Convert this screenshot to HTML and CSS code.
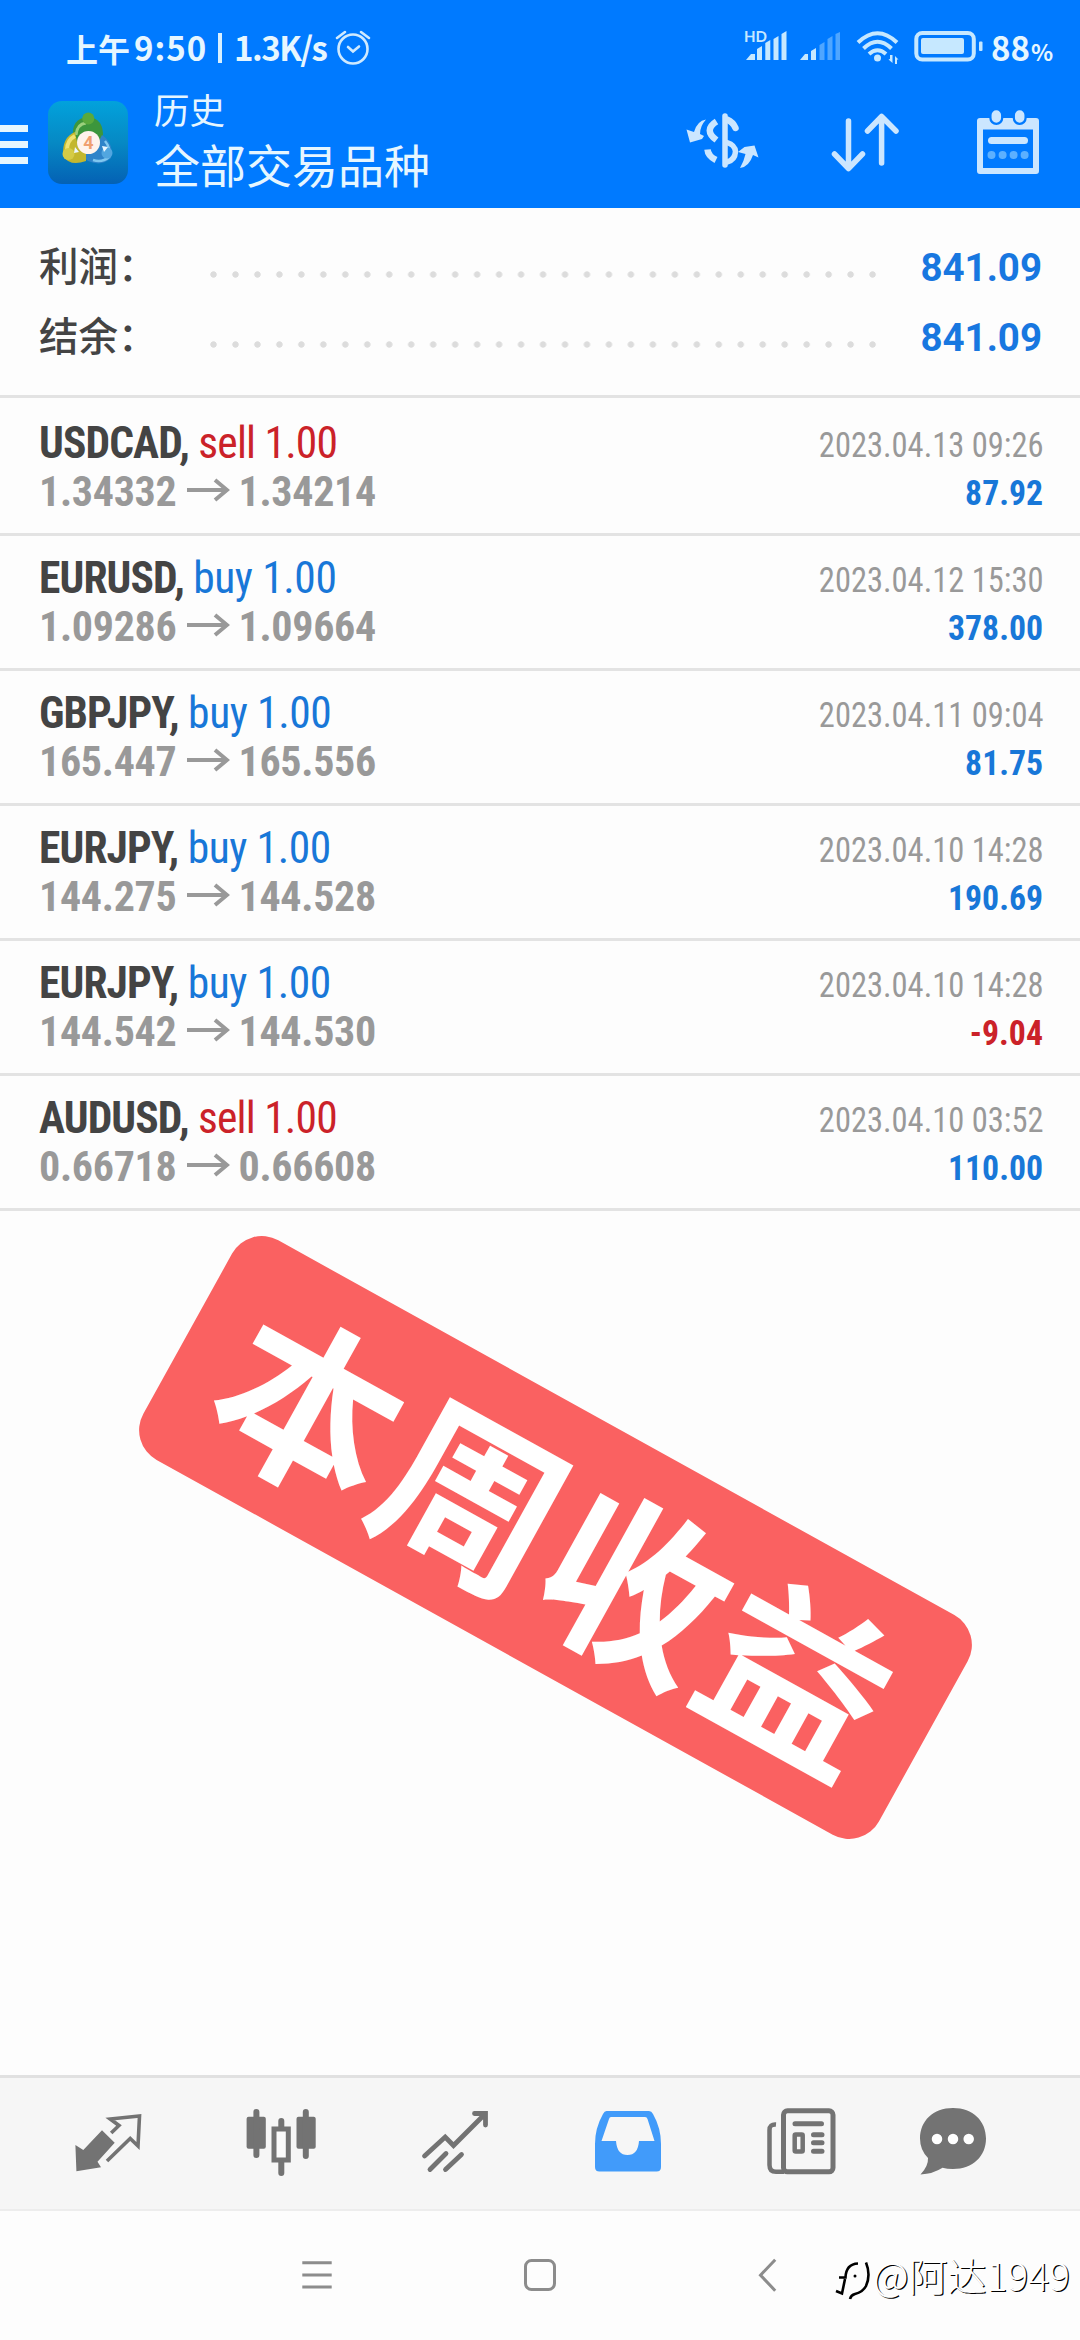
FILE: index.html
```html
<!DOCTYPE html>
<html lang="zh-CN">
<head>
    <meta charset="UTF-8">
    <meta name="viewport" content="width=device-width, initial-scale=1.0">
    <title>历史</title>
    <link rel="stylesheet" href="styles.css">
</head>
<body>
    <header class="header">
        <!-- 状态栏 -->
        <div class="status-bar">
            <span class="status-time">上午</span>
            <span class="status-clock">9:50</span>
            <span class="status-sep"></span>
            <span class="status-speed">1.3K/s</span>
            <svg class="alarm" width="36" height="36" viewBox="335 31 36 36" fill="none" stroke="#cfeaff" stroke-width="2.6" stroke-linecap="round">
                <circle cx="353" cy="50" r="14.5"/>
                <path d="M337 39l8-6M361 33l8 6M348 48l5 4.500 6-5"/>
            </svg>
            <svg class="status-icons" width="240" height="40" viewBox="743 30 240 40" fill="#c6e8ff">
                <text class="hd" x="744" y="43.500">HD</text>
                <path d="M746 62l5-6h4v6zM757 51l5-3v14h-5zM765.300 45l5-3v20h-5zM773.500 41l5-3v24h-5zM781.500 36l5-3v29h-5z"/>
                <path d="M800 62l5-6h3v6zM811 53l5-3v12h-5z"/>
                <path fill="#4fa6ff" d="M819.500 47l5-3v18h-5zM827.500 41l5-3v24h-5zM835.500 36l4.500-2v28h-4.500z"/>
                <g fill="none" stroke="#c6e8ff" stroke-width="4">
                    <path d="M858 44.500Q877.500 26 897 44.500M863.500 50.500Q877.500 37 891.500 50.500M869 56Q877.500 48.500 886 56"/>
                    <rect x="916.300" y="35" width="57.500" height="26.500" rx="6"/>
                </g>
                <circle cx="877.500" cy="60" r="3.500"/>
                <path d="M890 57h2.500v8l-4-3.500 1.500-.5zM895 66v-8l3.500 3.500h-1.500v4.500z"/>
                <rect x="921" y="40" width="43" height="16" rx="2"/>
                <rect x="979" y="43.500" width="3.500" height="9.500" rx="1"/>
            </svg>
            <span class="battery-num">88</span><span class="battery-unit">%</span>
        </div>

        <!-- 标题栏 -->
        <div class="toolbar">
            <div class="menu"><i></i><i></i><i></i></div>
            <svg class="app-icon" width="80" height="84" viewBox="0 0 80 84">
                <defs>
                    <linearGradient id="iconBg" x1="0" y1="0" x2="0" y2="1">
                        <stop offset="0" stop-color="#02a2dc"/>
                        <stop offset=".5" stop-color="#0689c4"/>
                        <stop offset="1" stop-color="#0461b4"/>
                    </linearGradient>
                </defs>
                <rect x="0" y="0" width="80" height="83" rx="14" fill="url(#iconBg)"/>
                <path d="M25 37Q23 17 40 16Q56 17 55 37L50 44H30Z" fill="#3c963c"/>
                <path d="M28 34Q29 23 38 22" stroke="#9bd07c" stroke-width="3" fill="none"/>
                <path d="M54 34Q66 42 63 57Q54 66 40 60L33 54L50 42Z" fill="#2f83c9"/>
                <path d="M57 40Q63 47 61 56Q54 62 45 59" stroke="#80c7ef" stroke-width="2.500" fill="none"/>
                <path d="M27 31Q14 36 15 55Q22 66 38 60V52L30 46Z" fill="#c3b72e"/>
                <path d="M27 35Q19 39 19 49" stroke="#efe272" stroke-width="4" fill="none"/>
                <circle cx="40.300" cy="17.500" r="6" fill="#5aa93c"/>
                <circle cx="20.500" cy="53" r="6" fill="#d5cb45"/>
                <circle cx="59" cy="52" r="5.500" fill="#51a6e0"/>
                <path d="M54 45l6 1-4 5zM27 46l4 5-5 1z" fill="#e9f6ff"/>
                <circle cx="40.500" cy="41.500" r="11.500" fill="#fff3ec"/>
                <text class="icon-num" x="40.500" y="48">4</text>
            </svg>
            <div class="titles">
                <div class="title-small">历史</div>
                <div class="title-main">全部交易品种</div>
            </div>
            <svg class="tool-icons" width="360" height="70" viewBox="682 108 360 70" fill="none" stroke="#cbe6ff" stroke-width="5.500" stroke-linecap="round" stroke-linejoin="round">
                <!-- 货币 -->
                <path d="M725 116V165"/>
                <path d="M727 119.500Q733 122 735.500 128" stroke-width="6.500"/>
                <path d="M716.500 121.500Q703 130 716.500 140M707.500 149.500Q708 156 716 160" stroke-width="6.500" stroke-linecap="butt"/>
                <path d="M727 142.500Q735 145 735.500 151.500Q735 160 727 162" stroke-width="5.500"/>
                <g fill="#cbe6ff" stroke="none">
                    <path d="M706 119.500Q697 121 694 132L686.500 129.500L690 142.500L702 139L704 136L700 134Q700 126 706 119.500Z"/>
                    <path d="M740 168Q749 167 753 155L758.500 157.500L754.500 145.500L744.500 147L738 152L745.500 154Q744 161 740 168Z"/>
                </g>
                <!-- 排序 -->
                <path d="M848.500 121V168M834.500 154L848.500 168.500L862.500 154"/>
                <path d="M881.600 163V117M867.500 131L881.600 116.500L896 131"/>
                <!-- 日历 -->
                <path d="M980 121H1036V171H980Z" stroke-width="6"/>
                <path d="M980 125.500H1036" stroke-width="8" stroke-linecap="butt"/>
                <path d="M996.300 112V118M1019.700 112V118" stroke="#007aff" stroke-width="14"/>
                <path d="M996.300 115V118M1019.700 115V118" stroke-width="9.500"/>
                <path d="M991.500 140.500H1024.500" stroke-width="7"/>
                <path d="M991.500 155h.01M1002.600 155h.01M1013.600 155h.01M1024.600 155h.01" stroke="#5cb0ff" stroke-width="8"/>
            </svg>
        </div>
    </header>

    <main class="content">
        <section class="summary">
            <div class="summary-row">
                <span class="summary-label">利润：</span>
                <span class="dots"></span>
                <span class="summary-value">841.09</span>
            </div>
            <div class="summary-row">
                <span class="summary-label">结余：</span>
                <span class="dots"></span>
                <span class="summary-value">841.09</span>
            </div>
        </section>

        <ul class="deals">
            <li class="deal">
                <div class="line"><span class="symbol"><b>USDCAD,</b> <span class="sell">sell 1.00</span></span><span class="date">2023.04.13 09:26</span></div>
                <div class="line"><span class="prices"><span>1.34332</span><svg class="arrow" viewBox="0 0 44 24"><path d="M1 12H41M29 2L41 12L29 22"/></svg><span>1.34214</span></span><span class="profit">87.92</span></div>
            </li>
            <li class="deal">
                <div class="line"><span class="symbol"><b>EURUSD,</b> <span class="buy">buy 1.00</span></span><span class="date">2023.04.12 15:30</span></div>
                <div class="line"><span class="prices"><span>1.09286</span><svg class="arrow" viewBox="0 0 44 24"><path d="M1 12H41M29 2L41 12L29 22"/></svg><span>1.09664</span></span><span class="profit">378.00</span></div>
            </li>
            <li class="deal">
                <div class="line"><span class="symbol"><b>GBPJPY,</b> <span class="buy">buy 1.00</span></span><span class="date">2023.04.11 09:04</span></div>
                <div class="line"><span class="prices"><span>165.447</span><svg class="arrow" viewBox="0 0 44 24"><path d="M1 12H41M29 2L41 12L29 22"/></svg><span>165.556</span></span><span class="profit">81.75</span></div>
            </li>
            <li class="deal">
                <div class="line"><span class="symbol"><b>EURJPY,</b> <span class="buy">buy 1.00</span></span><span class="date">2023.04.10 14:28</span></div>
                <div class="line"><span class="prices"><span>144.275</span><svg class="arrow" viewBox="0 0 44 24"><path d="M1 12H41M29 2L41 12L29 22"/></svg><span>144.528</span></span><span class="profit">190.69</span></div>
            </li>
            <li class="deal">
                <div class="line"><span class="symbol"><b>EURJPY,</b> <span class="buy">buy 1.00</span></span><span class="date">2023.04.10 14:28</span></div>
                <div class="line"><span class="prices"><span>144.542</span><svg class="arrow" viewBox="0 0 44 24"><path d="M1 12H41M29 2L41 12L29 22"/></svg><span>144.530</span></span><span class="profit loss">-9.04</span></div>
            </li>
            <li class="deal">
                <div class="line"><span class="symbol"><b>AUDUSD,</b> <span class="sell">sell 1.00</span></span><span class="date">2023.04.10 03:52</span></div>
                <div class="line"><span class="prices"><span>0.66718</span><svg class="arrow" viewBox="0 0 44 24"><path d="M1 12H41M29 2L41 12L29 22"/></svg><span>0.66608</span></span><span class="profit">110.00</span></div>
            </li>
        </ul>

        <div class="stamp">本周收益</div>
    </main>

    <!-- 底部标签 -->
    <nav class="tabs">
        <svg viewBox="72 2106 72 72">
            <path fill="#737373" d="M75.400 2145L83.300 2150L102 2130.300L114.700 2142.700L97.500 2161.700L101 2167.300L76.400 2171.300Z"/>
            <path fill="none" stroke="#737373" stroke-width="3.600" d="M111.200 2133L119 2125.500L110.200 2119L139.500 2116L138 2146L130.200 2138.500L107 2161"/>
        </svg>
        <svg viewBox="245 2106 72 72" fill="#737373">
            <rect x="246.600" y="2116.700" width="19.200" height="32" rx="2"/>
            <rect x="296.500" y="2116.700" width="19.200" height="32" rx="2"/>
            <path fill="none" stroke="#737373" stroke-width="6" stroke-linecap="round" d="M256.400 2112V2155M305.800 2112V2156M281.300 2121V2127M281.300 2162V2173"/>
            <rect x="274" y="2129" width="14.300" height="31" fill="#fafafa" stroke="#737373" stroke-width="5"/>
        </svg>
        <svg viewBox="418 2106 72 72" fill="none" stroke="#737373" stroke-width="4.800" stroke-linecap="round">
            <path d="M423.500 2156L444.200 2137L452.500 2145.500L484 2114M473.500 2113.500H484.500V2125"/>
            <path d="M445 2153.500L429 2169.500M460.500 2154.500L444.500 2169.500"/>
        </svg>
        <svg viewBox="592 2106 72 72">
            <path fill="#419bfa" fill-rule="evenodd" d="M606.500 2111H649Q651.500 2111 653 2114Q661 2128 661 2144V2167Q661 2171.500 656.500 2171.500H599.500Q595 2171.500 595 2167V2144Q595 2128 603 2114Q604.500 2111 606.500 2111ZM611 2117Q609.500 2117 609 2119L601.500 2141H616Q617 2155 627.500 2155Q638 2155 639 2141H654.500L647.500 2119Q647 2117 645 2117Z"/>
        </svg>
        <svg viewBox="765 2106 72 72" fill="none" stroke="#737373" stroke-width="5">
            <rect x="783.500" y="2110.800" width="49.500" height="61" rx="4"/>
            <path d="M776 2124.500Q769.500 2124 769.500 2130V2165Q769.500 2171.800 776 2171.800H784" stroke-width="4.500"/>
            <path d="M795 2123.700H821.500M813.500 2134.700H822M813.500 2142.800H822M813.500 2151.200H822" stroke-linecap="round"/>
            <rect x="794.700" y="2134.500" width="8" height="17" rx="1" fill="#f6f6f6" stroke-width="4.500"/>
        </svg>
        <svg viewBox="917 2106 72 72">
            <path fill="#737373" d="M953 2108C973 2108 986 2121 986 2138.500C986 2156 973 2169 953 2169Q947 2169 942.500 2167.800Q933 2174 920.500 2174.500Q928.500 2166 928 2158Q920 2150 920 2138.500C920 2121 933 2108 953 2108Z"/>
            <path fill="none" stroke="#fff" stroke-width="10.500" stroke-linecap="round" d="M937 2139h.01M953 2139h.01M968.700 2139h.01"/>
        </svg>
    </nav>

    <!-- 系统导航 -->
    <footer class="system-nav">
        <svg width="32" height="34" viewBox="301 2258 32 34"><path d="M302.300 2262.700H331.700M302.300 2275H331.700M302.300 2287H331.700"/></svg>
        <svg width="34" height="34" viewBox="523 2258 34 34"><rect x="525.500" y="2260.500" width="29" height="29" rx="6"/></svg>
        <svg width="20" height="34" viewBox="757 2258 20 34"><path d="M775.200 2259.700L760.500 2275.200L775.200 2290.700"/></svg>
        <div class="watermark">
            <svg width="38" height="46" viewBox="835 2262 38 46">
                <path fill="none" stroke="#000" stroke-width="2.600" d="M839 2281.500H845.500Q846 2268 858 2267.500M836 2295L842 2297.500L845 2283M866 2266.500Q871 2279 866 2290Q863 2296 855 2298Q851 2299 850 2303"/>
                <circle cx="855" cy="2280" r="1.500" fill="#000" stroke="none"/>
            </svg>
            <span>@阿达1949</span>
        </div>
    </footer>
</body>
</html>
```
FILE: styles.css
```css
* {
    box-sizing: border-box;
}
body {
    margin: 0;
    width: 1080px;
    height: 2340px;
    display: flex;
    flex-direction: column;
    overflow: hidden;
    background: #fdfdfd;
    font-family: Roboto, 'Noto Sans CJK SC', sans-serif;
}
svg {
    display: block;
    flex: none;
}

/* 顶部 */
.header {
    height: 208px;
    background: #007aff;
    color: #e6f6ff;
}
.status-bar {
    display: flex;
    align-items: center;
    height: 96px;
    padding-left: 66px;
    font-family: 'Noto Sans CJK SC', sans-serif;
    font-weight: 700;
    font-size: 33px;
    line-height: 46px;
    white-space: nowrap;
}
.status-time {
    width: 68px;
    font-size: 32px;
}
.status-clock {
    width: 84px;
    letter-spacing: 1px;
}
.status-sep {
    width: 4px;
    height: 30px;
    margin-right: 12px;
    background: #d8f0ff;
}
.status-speed {
    width: 101px;
    letter-spacing: -1.500px;
}
.status-clock, .status-speed, .battery-num {
    margin-top: -2px;
}
.status-icons {
    margin-left: 372px;
}
.hd {
    font: bold 15px Lato, sans-serif;
}
.battery-num {
    margin-left: 8px;
}
.battery-unit {
    padding-top: 6px;
    margin-left: 1px;
    font-size: 23px;
    letter-spacing: -1px;
}
.toolbar {
    display: flex;
    height: 112px;
}
.menu {
    width: 28px;
    padding-top: 29px;
}
.menu i {
    display: block;
    height: 6.500px;
    margin-bottom: 9.700px;
    background: #e6f6ff;
}
.app-icon {
    margin: 5px 0 0 20px;
}
.icon-num {
    font: bold 18px Roboto, sans-serif;
    fill: #f0a070;
    text-anchor: middle;
}
.titles {
    width: 554px;
    padding-left: 26px;
    font-family: 'Noto Sans CJK SC', sans-serif;
}
.title-small {
    margin-top: -11px;
    font-size: 35.500px;
    line-height: 48px;
}
.title-main {
    font-size: 46px;
    line-height: 60px;
}
.tool-icons {
    margin-top: 12px;
}

/* 汇总 */
.content {
    flex: 1;
}
.summary {
    height: 190px;
    padding: 24px 38px 0 39px;
    border-bottom: 3px solid #e3e3e3;
}
.summary-row {
    display: flex;
    align-items: center;
    height: 70px;
}
.summary-label {
    width: 171px;
    margin-top: -7px;
    color: #444;
    font-family: 'Noto Sans CJK SC', sans-serif;
    font-weight: 500;
    font-size: 39.500px;
    white-space: nowrap;
}
.dots {
    width: 678px;
    height: 7px;
    margin-top: 15px;
    margin-right: 32px;
    background: radial-gradient(circle at 3.500px 3.500px, #dcdcdc 2.800px, transparent 3.600px) 0 0 / 21.980px 7px repeat-x;
}
.summary-value {
    flex: 1;
    color: #1877e0;
    font-weight: 700;
    font-size: 38.500px;
    text-align: right;
}

/* 成交列表 */
.deals {
    margin: 0;
    padding: 3px 0 0;
    list-style: none;
}
.deal {
    height: 135px;
    padding: 17px 37px 0 39px;
    border-bottom: 3px solid #e3e3e3;
}
.line {
    display: flex;
    justify-content: space-between;
    height: 48px;
    line-height: 54px;
    white-space: nowrap;
}
.symbol, .prices, .date, .profit {
    font-stretch: 75%;
}
.symbol {
    color: #444;
    font-size: 43.500px;
    line-height: 52px;
    letter-spacing: -.7px;
}
.symbol b {
    letter-spacing: -.9px;
}
.sell {
    color: #cb2229;
    letter-spacing: -.8px;
}
.buy {
    color: #1877d8;
    letter-spacing: -.4px;
}
.date {
    color: #999;
    font-size: 35.500px;
    transform: scaleX(.915);
    transform-origin: right;
}
.prices {
    display: flex;
    align-items: center;
    height: 52px;
    color: #999;
    font-weight: 700;
    font-size: 42px;
    letter-spacing: -.3px;
}
.arrow {
    width: 44px;
    height: 24px;
    margin: -4px 8.500px 0 9.500px;
    fill: none;
    stroke: #999;
    stroke-width: 4;
}
.profit {
    color: #1877d8;
    font-weight: 700;
    font-size: 35.500px;
    line-height: 55px;
    transform: scaleX(.95);
    transform-origin: right;
}
.loss {
    color: #cb2229;
}

/* 印章 */
.stamp {
    width: 841px;
    height: 251px;
    margin: 201px 0 0 134.500px;
    border-radius: 34px;
    background: #fa6161;
    color: #fff;
    font-family: 'Noto Sans CJK SC', sans-serif;
    font-weight: 700;
    font-size: 182px;
    line-height: 242px;
    letter-spacing: 4px;
    text-indent: 51px;
    white-space: nowrap;
    transform: rotate(29deg);
}

/* 底部 */
.tabs {
    display: flex;
    gap: 101.300px;
    height: 136px;
    padding: 28px 0 0 72px;
    border-top: 3px solid #e1e1e1;
    border-bottom: 2px solid #ededed;
    background: #f6f6f6;
}
.tabs svg {
    width: 72px;
    height: 72px;
}
.tabs svg:last-child {
    margin-left: -21px;
}
.system-nav {
    display: flex;
    height: 129px;
    padding: 47px 0 0 301px;
    fill: none;
    stroke: #8c8c8c;
    stroke-width: 3;
}
.system-nav > svg:nth-child(2) {
    margin-left: 190px;
}
.system-nav > svg:nth-child(3) {
    margin-left: 200px;
}
.watermark {
    display: flex;
    margin-left: 58px;
    color: #fff;
    font-family: 'Noto Sans CJK SC', sans-serif;
    font-weight: 300;
    font-size: 39px;
    line-height: 32px;
    white-space: nowrap;
    text-shadow: 1.200px 1.200px 0 #000;
}
```
